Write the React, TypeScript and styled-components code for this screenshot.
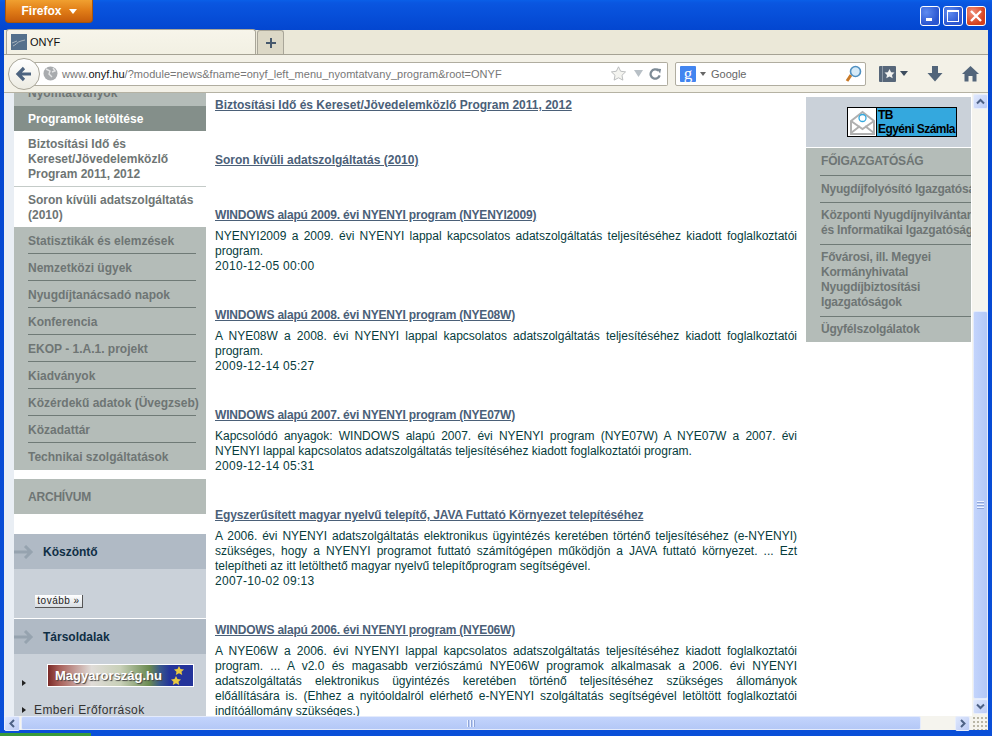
import React from "react";
import styled, { createGlobalStyle } from "styled-components";

const Global = createGlobalStyle`
  html, body { margin: 0; padding: 0; height: 736px; overflow: hidden; background: #0a4fd8; }
  * { box-sizing: border-box; }
  #root { height: 736px; }
`;

const Win = styled.div`
  width: 992px; height: 736px; display: flex; flex-direction: column;
  background: linear-gradient(180deg, #0a5fe8 0, #0a56e0 3px, #0346d0 30px, #0a4fd8 100%);
  font-family: "Liberation Sans", Arial, sans-serif; overflow: hidden;
`;
const TitleBar = styled.div`
  height: 30px; flex: none; display: flex; justify-content: space-between; padding: 0 6px 0 5px;
`;
const FirefoxBtn = styled.div`
  width: 88px; height: 23px; display: flex; align-items: center; justify-content: center; gap: 7px;
  background: linear-gradient(180deg, #f0a030 0, #e27f18 45%, #c65c0a 100%);
  border: 1px solid #a5560f; border-top: none; border-radius: 0 0 4px 4px;
  color: #fff; font-weight: bold; font-size: 12px;
  &::after { content: ""; border: 4px solid transparent; border-top: 5px solid #fff; border-bottom: none; }
`;
const Controls = styled.div`display: flex; gap: 3px; padding-top: 6px;`;
const Ctl = styled.div<{ $red?: boolean }>`
  width: 20px; height: 20px; border: 1px solid #fff; border-radius: 3px;
  background: ${p => p.$red ? "radial-gradient(circle at 30% 30%, #f0907a, #d5401c 70%)" : "radial-gradient(circle at 30% 30%, #5f8cf0, #2a55d0 70%)"};
  display: flex; align-items: center; justify-content: center;
`;
const Chrome = styled.div`
  margin: 0 4px; flex: none; background: #ebe8d8;
`;
const TabStrip = styled.div`
  height: 25px; display: flex; align-items: flex-end; padding-left: 1px; border-bottom: 1px solid #a5a294;
`;
const Tab = styled.div`
  width: 250px; height: 25px; background: linear-gradient(180deg, #f7f5ea, #f2f0e3); margin-left: 1px;
  border: 1px solid #a9a699; border-bottom: none; border-radius: 3px 3px 0 0;
  display: flex; align-items: center; gap: 3px; padding-left: 4px; font-size: 11px; color: #111;
  letter-spacing: -0.1px;
`;
const NewTab = styled.div`
  width: 27px; height: 24px; background: #dcd8c6; border: 1px solid #a9a699; border-bottom: none;
  border-radius: 3px 3px 0 0; margin-left: 1px; display: flex; align-items: center; justify-content: center;
`;
const NavBar = styled.div`
  height: 38px; background: #f3f1e7; border-bottom: 1px solid #b5b2a3; display: flex; align-items: center;
  position: relative; padding-left: 25px;
`;
const BackBtn = styled.div`
  position: absolute; left: 4px; top: 3px; width: 32px; height: 32px; border-radius: 50%;
  border: 1px solid #a9a699; background: linear-gradient(180deg, #fff, #ecebe2);
  display: flex; align-items: center; justify-content: center; z-index: 1;
`;
const UrlBar = styled.div`
  width: 639px; height: 24px; background: #fff; border: 1px solid #b0ada0; border-left: none;
  border-radius: 0 2px 2px 0; display: flex; align-items: center; padding: 0 5px 0 14px; font-size: 11px; color: #777;
  white-space: nowrap;
`;
const UrlText = styled.span`
  margin-left: 4px; flex: 1; letter-spacing: 0.02px; b { font-weight: normal; color: #111; }
`;
const DropArrow = styled.svg`margin: 0 4px 0 6px;`;
const SearchBar = styled.div`
  width: 191px; height: 24px; background: #fff; border: 1px solid #b0ada0; border-radius: 2px; margin-left: 7px;
  display: flex; align-items: center; padding: 0 3px 0 4px; font-size: 11px; color: #666; gap: 4px;
`;
const GoogleIcon = styled.div`
  width: 16px; height: 16px; background: #4285f0; color: #fff; font-family: "Liberation Serif", serif;
  font-size: 17px; line-height: 12px; display: flex; align-items: center; justify-content: center; border-radius: 1px;
`;
const SmallCaret = styled.span<{ $big?: boolean }>`
  width: 0; height: 0; border-style: solid; border-color: transparent; border-bottom: none;
  border-width: ${p => p.$big ? "5px 4px 0" : "4px 3px 0"};
  border-top-color: ${p => p.$big ? "#3c4c5e" : "#666"};
`;
const SearchText = styled.span`flex: 1; margin-left: 1px;`;
const Tools = styled.div`display: flex; align-items: center; margin-left: 13px;`;
const ToolSlot = styled.div<{ $w: number }>`
  width: ${p => p.$w}px; display: flex; align-items: center; gap: 4px;
`;
const Body = styled.div`
  margin: 0 4px; height: 623px; flex: none; display: flex; background: #fff; overflow: hidden;
`;
const Viewport = styled.div`
  width: 968px; flex: none; display: flex; overflow: hidden; height: 623px;
`;
const Gutter = styled.div`width: 10px; flex: none; background: #e9eef4;`;
const LeftCol = styled.div`
  width: 192px; flex: none; display: flex; flex-direction: column; margin-top: -7px; font-size: 12px; font-weight: bold; color: #6e7574;
  & > * { flex: none; }
`;
const Active = styled.div`
  height: 25px; background: #848f8a; color: #fff; padding-left: 14px; line-height: 27px;
`;
const Sub = styled.div<{ $line?: boolean }>`
  padding: 6px 8px 4px 14px; line-height: 15px; background: #fff;
  ${p => p.$line ? "border-bottom: 1px solid #c4cbc8;" : ""}
`;
const TopCut = styled.div`
  height: 20px; background: #b4bcb8; padding-left: 14px; line-height: 15px;
`;
const GrayList = styled.div`
  background: #b4bcb8; padding: 0 10px 0 14px; height: 243px;
`;
const GrayItem = styled.div<{ $last?: boolean }>`
  height: 27px; line-height: 28px; border-bottom: ${p => p.$last ? "none" : "1px solid #6f7a76"};
  white-space: nowrap; color: #6e7574;
`;
const Archive = styled.div`
  height: 35px; background: #b4bcb8; margin-top: 9px; padding-left: 14px; line-height: 37px; letter-spacing: -0.2px;
`;
const PanelHead = styled.div<{ $mt: number }>`
  height: 35px; margin-top: ${p => p.$mt}px; background: #b0bac5; display: flex; align-items: center;
  color: #0f2f45; gap: 9px;
`;
const PanelBody = styled.div<{ $h: number }>`
  height: ${p => p.$h}px; background: #cad1d9;
`;
const WelcomeBody = styled(PanelBody)`
  padding: 26px 0 0 21px;
`;
const MoreBtn = styled.div`
  width: 48px; height: 13px; background: linear-gradient(180deg, #fff, #d8dde2); border-right: 1px solid #555; border-bottom: 1px solid #555;
  font-size: 10px; font-weight: normal; color: #222; text-align: center; line-height: 11px; letter-spacing: 0.5px;
`;
const LinksBody = styled(PanelBody)`
  padding: 10px 0 0 8px; font-weight: normal; color: #333; position: relative;
`;
const LinkRow = styled.div<{ $h: number }>`
  display: flex; align-items: flex-end; height: ${p => p.$h}px; gap: 8px; letter-spacing: 0.4px;
`;
const Bullet = styled.span`
  width: 0; height: 0; border: 3px solid transparent; border-left: 4px solid #222; border-right: none; margin-bottom: 4px; flex: none;
`;
const Banner = styled.div`
  position: absolute; left: 33px; top: 10px; width: 147px; height: 23px; overflow: hidden; border: 1px solid #fff;
  background: linear-gradient(90deg, #7a2a28 0, #a8605a 8%, #e0dcd8 30%, #c8d0b8 50%, #6a8a50 70%, #3a5a8a 77%, #24349a 84%, #24349a 100%);
  color: #fff; font-weight: bold; font-size: 13px; padding-left: 7px; line-height: 21px; text-shadow: 1px 1px 1px #444;
`;
const BannerStars = styled.svg`
  position: absolute; right: 6px; top: 1px;
`;
const Main = styled.div`
  width: 600px; flex: none; padding: 5px 9px 0 9px; font-size: 12px; color: #063c3c; line-height: 15px;
`;
const Article = styled.div`padding-bottom: 34px;`;
const Title = styled.a<{ $ls: number }>`
  display: block; font-weight: bold; color: #4b6078; text-decoration: underline; margin-bottom: 6px; white-space: nowrap;
  letter-spacing: ${p => p.$ls}px;
`;
const Line = styled.div<{ $last?: boolean }>`
  text-align: ${p => p.$last ? "left" : "justify"};
  text-align-last: ${p => p.$last ? "left" : "justify"};
`;
const Stamp = styled.div`letter-spacing: 0.3px;`;
const RightCol = styled.div`
  width: 165px; flex: none; padding-top: 4px; font-size: 12px; font-weight: bold; color: #6e7574; overflow: hidden;
`;
const TbPanel = styled.div`
  height: 51px; background: #cad1d9; border-bottom: 1px solid #fff; display: flex; justify-content: flex-end; padding: 10px 14px 0 0;
`;
const TbBtn = styled.div`
  width: 110px; height: 30px; border: 1px solid #000; display: flex; background: #34a8de; color: #000; line-height: 14px;
`;
const TbIcon = styled.div`
  width: 29px; background: #fff; border-right: 1px solid #000; display: flex; align-items: center; justify-content: center; flex: none;
`;
const TbText = styled.div`padding: 0 0 0 1px; white-space: nowrap; font-size: 12px; letter-spacing: -0.55px;`;
const RightList = styled.div`
  background: #b4bcb8; padding-left: 14px; white-space: nowrap; letter-spacing: -0.2px;
`;
const RightItem = styled.div<{ $top?: number; $bottom?: number; $last?: boolean }>`
  padding: ${p => p.$top ?? 5}px 0 ${p => p.$bottom ?? 6}px 1px; line-height: 15px;
  border-bottom: ${p => p.$last ? "none" : "1px solid #6f7a76"};
`;
const VScrollSpacer = styled.div`flex: 1;`;
const VScroll = styled.div`
  width: 16px; flex: none; background: #f5f4ee; display: flex; flex-direction: column; align-items: center; padding-top: 1px;
`;
const SBtn = styled.div<{ $w?: number }>`
  width: ${p => p.$w ?? 15}px; height: 15px; flex: none; background: linear-gradient(135deg, #dfe8fd, #bccbf5); border: 1px solid #e8eefc; border-radius: 2px;
  display: flex; align-items: center; justify-content: center;
`;
const VThumb = styled.div`
  width: 15px; flex: none; height: 388px; margin-top: 202px; background: linear-gradient(90deg, #c3d4fc, #b4c8f6);
  border: 1px solid #e4ebfc; border-radius: 2px; display: flex; align-items: center; justify-content: center;
  &::after { content: ""; width: 7px; height: 8px; background: repeating-linear-gradient(180deg, #eef3ff 0 1px, #8fa5d8 1px 2px, transparent 2px 3px); }
`;
const HScroll = styled.div`
  margin: 0 4px; height: 14px; flex: none; background: #f5f4ee; display: flex; align-items: center;
`;
const HThumb = styled.div`
  width: 900px; height: 14px; margin: 0 34px 0 1px; background: linear-gradient(180deg, #c3d4fc, #b4c8f6);
  border: 1px solid #e4ebfc; border-radius: 2px; display: flex; align-items: center; justify-content: center;
  &::after { content: ""; width: 8px; height: 7px; background: repeating-linear-gradient(90deg, #eef3ff 0 1px, #8fa5d8 1px 2px, transparent 2px 3px); }
`;
const Grip = styled.div`
  width: 16px; height: 14px; margin-left: 2px;
  background: radial-gradient(circle, #b9b6a6 1px, transparent 1.2px) 0 0 / 4px 4px;
`;
const BottomBar = styled.div`
  flex: 1; position: relative;
  &::before { content: ""; position: absolute; left: 0; bottom: 0; width: 91px; height: 3px; background: #3a9a3a; }
`;

const Chev = ({ d }: { d: string }) => (
  <svg width="9" height="9" viewBox="0 0 9 9"><path d={d} fill="none" stroke="#4d6185" strokeWidth="2" /></svg>
);

type Art = { t: string; ls?: number; lines?: string[]; stamp?: string };

const articles: Art[] = [
  { t: "Biztosítási Idő és Kereset/Jövedelemközlő Program 2011, 2012" },
  { t: "Soron kívüli adatszolgáltatás (2010)" },
  { t: "WINDOWS alapú 2009. évi NYENYI program (NYENYI2009)", ls: -0.2, lines: ["NYENYI2009 a 2009. évi NYENYI lappal kapcsolatos adatszolgáltatás teljesítéséhez kiadott foglalkoztatói", "program."], stamp: "2010-12-05 00:00" },
  { t: "WINDOWS alapú 2008. évi NYENYI program (NYE08W)", ls: -0.2, lines: ["A NYE08W a 2008. évi NYENYI lappal kapcsolatos adatszolgáltatás teljesítéséhez kiadott foglalkoztatói", "program."], stamp: "2009-12-14 05:27" },
  { t: "WINDOWS alapú 2007. évi NYENYI program (NYE07W)", ls: -0.2, lines: ["Kapcsolódó anyagok: WINDOWS alapú 2007. évi NYENYI program (NYE07W) A NYE07W a 2007. évi", "NYENYI lappal kapcsolatos adatszolgáltatás teljesítéséhez kiadott foglalkoztatói program."], stamp: "2009-12-14 05:31" },
  { t: "Egyszerűsített magyar nyelvű telepítő, JAVA Futtató Környezet telepítéséhez", ls: -0.1, lines: ["A 2006. évi NYENYI adatszolgáltatás elektronikus ügyintézés keretében történő teljesítéséhez (e-NYENYI)", "szükséges, hogy a NYENYI programot futtató számítógépen működjön a JAVA futtató környezet. ... Ezt", "telepítheti az itt letölthető magyar nyelvű telepítőprogram segítségével."], stamp: "2007-10-02 09:13" },
  { t: "WINDOWS alapú 2006. évi NYENYI program (NYE06W)", ls: -0.2, lines: ["A NYE06W a 2006. évi NYENYI lappal kapcsolatos adatszolgáltatás teljesítéséhez kiadott foglalkoztatói", "program. ... A v2.0 és magasabb verziószámú NYE06W programok alkalmasak a 2006. évi NYENYI", "adatszolgáltatás elektronikus ügyintézés keretében történő teljesítéséhez szükséges állományok", "előállítására is. (Ehhez a nyitóoldalról elérhető e-NYENYI szolgáltatás segítségével letöltött foglalkoztatói", "indítóállomány szükséges.)"] },
];

const grayItems = ["Statisztikák és elemzések", "Nemzetközi ügyek", "Nyugdíjtanácsadó napok", "Konferencia", "EKOP - 1.A.1. projekt", "Kiadványok", "Közérdekű adatok (Üvegzseb)", "Közadattár", "Technikai szolgáltatások"];

const Arrow = () => (
  <svg width="20" height="14" viewBox="0 0 20 14"><path d="M0 7h17M11 1l6 6-6 6" fill="none" stroke="#96a3af" strokeWidth="3" /></svg>
);

export default function App() {
  return (
    <Win>
      <Global />
      <TitleBar>
        <FirefoxBtn>Firefox</FirefoxBtn>
        <Controls>
          <Ctl><svg width="10" height="12" viewBox="0 0 10 12"><rect x="1" y="8" width="6" height="3" fill="#fff" /></svg></Ctl>
          <Ctl><svg width="14" height="14" viewBox="0 0 14 14"><rect x="1.5" y="1.5" width="11" height="11" fill="none" stroke="#fff" /><rect x="1" y="1" width="12" height="2" fill="#fff" /></svg></Ctl>
          <Ctl $red><svg width="12" height="12" viewBox="0 0 12 12"><path d="M1 1l10 10M11 1L1 11" stroke="#fff" strokeWidth="2.4" /></svg></Ctl>
        </Controls>
      </TitleBar>
      <Chrome>
        <TabStrip>
          <Tab>
            <svg width="16" height="16" viewBox="0 0 16 16"><rect width="16" height="16" fill="#54708c" /><path d="M2 12c3-1 4-4 8-5l4-1M1 9l5-2" stroke="#a8b4bd" fill="none" /></svg>
            ONYF
          </Tab>
          <NewTab><svg width="12" height="12" viewBox="0 0 12 12"><path d="M6 1v10M1 6h10" stroke="#46586c" strokeWidth="2" /></svg></NewTab>
        </TabStrip>
        <NavBar>
          <BackBtn><svg width="18" height="16" viewBox="0 0 18 16"><path d="M16 8H4M9 2L3 8l6 6" fill="none" stroke="#4d6480" strokeWidth="3.2" /></svg></BackBtn>
          <UrlBar>
            <svg width="15" height="15" viewBox="0 0 15 15"><circle cx="7.5" cy="7.5" r="7" fill="#a8abae" /><path d="M3 3l4 2-1 3 3 3M10 2l2 3-3 1" stroke="#e3e4e5" fill="none" strokeWidth="1.4" /></svg>
            <UrlText>www.<b>onyf.hu</b>/?module=news&amp;fname=onyf_left_menu_nyomtatvany_program&amp;root=ONYF</UrlText>
            <svg width="17" height="17" viewBox="0 0 19 18"><path d="M9.5 1.5l2.4 5 5.5.7-4 3.800 1 5.400-4.900-2.600-4.900 2.600 1-5.400-4-3.800 5.500-.7z" fill="#f4f4f0" stroke="#b5b7b8" /></svg>
            <DropArrow width="12" height="8" viewBox="0 0 12 8"><path d="M1 0h9L5.500 7z" fill="#b8c0c6" /></DropArrow>
            <svg width="13" height="14" viewBox="0 0 14 14"><path d="M11.500 8.500A5 5 0 1 1 10 3.300" fill="none" stroke="#7d8b96" strokeWidth="2.400" /><path d="M8 1l5 .500-1 5z" fill="#7d8b96" /></svg>
          </UrlBar>
          <SearchBar>
            <GoogleIcon>g</GoogleIcon>
            <SmallCaret />
            <SearchText>Google</SearchText>
            <svg width="17" height="18" viewBox="0 0 17 18"><path d="M6 10l-4 6" stroke="#c97a28" strokeWidth="3" /><circle cx="10.500" cy="6.500" r="5" fill="#d5eaf8" stroke="#4f90c0" strokeWidth="1.600" /></svg>
          </SearchBar>
          <Tools>
            <ToolSlot $w={48}>
              <svg width="17" height="16" viewBox="0 0 17 16"><rect width="17" height="16" rx="1" fill="#566679" /><rect x="3" y="0" width="1" height="16" fill="#8d99a6" /><path d="M10.500 3l1.600 3.200 3.400.4-2.500 2.300.7 3.400-3.200-1.700-3.200 1.700.7-3.400-2.500-2.300 3.400-.4z" fill="#f2f2f0" /></svg>
              <SmallCaret $big />
            </ToolSlot>
            <ToolSlot $w={35}>
              <svg width="16" height="16" viewBox="0 0 16 16"><path d="M5 0h6v7h4.500L8 15.500.500 7H5z" fill="#52657a" /></svg>
            </ToolSlot>
            <ToolSlot $w={18}>
              <svg width="17" height="16" viewBox="0 0 17 16"><path d="M8.500 0L17 8h-2.500v7.500H10.500V10h-4v5.500H2.500V8H0z" fill="#52657a" /></svg>
            </ToolSlot>
          </Tools>
        </NavBar>
      </Chrome>
      <Body>
        <Viewport>
          <Gutter />
          <LeftCol>
            <TopCut>Nyomtatványok</TopCut>
            <Active>Programok letöltése</Active>
            <Sub $line>Biztosítási Idő és<br />Kereset/Jövedelemközlő<br />Program 2011, 2012</Sub>
            <Sub>Soron kívüli adatszolgáltatás<br />(2010)</Sub>
            <GrayList>
              {grayItems.map((g, i) => <GrayItem key={g} $last={i === grayItems.length - 1}>{g}</GrayItem>)}
            </GrayList>
            <Archive>ARCHÍVUM</Archive>
            <PanelHead $mt={20}><Arrow />Köszöntő</PanelHead>
            <WelcomeBody $h={49}><MoreBtn>tovább »</MoreBtn></WelcomeBody>
            <PanelHead $mt={1}><Arrow />Társoldalak</PanelHead>
            <LinksBody $h={70}>
              <Banner>
                Magyarország.hu
                <BannerStars width="18" height="20" viewBox="0 0 18 20">
                  <path d="M10 0l1.500 3 3.500.4-2.500 2.300.7 3.300-3.200-1.700-3.200 1.700.7-3.300L5 3.400 8.500 3z" fill="#e8c840" />
                  <path d="M7 10l1.500 3 3.500.4-2.500 2.300.7 3.300L7 17.300l-3.200 1.700.7-3.300L2 13.400 5.500 13z" fill="#e8c840" />
                </BannerStars>
              </Banner>
              <LinkRow $h={26}><Bullet /></LinkRow>
              <LinkRow $h={27}><Bullet />Emberi Erőforrások</LinkRow>
            </LinksBody>
          </LeftCol>
          <Main>
            {articles.map(a => (
              <Article key={a.t}>
                <Title $ls={a.ls ?? 0}>{a.t}</Title>
                {a.lines?.map((l, i) => <Line key={l} $last={i === a.lines!.length - 1}>{l}</Line>)}
                {a.stamp && <Stamp>{a.stamp}</Stamp>}
              </Article>
            ))}
          </Main>
          <RightCol>
            <TbPanel>
              <TbBtn>
                <TbIcon>
                  <svg width="25" height="25" viewBox="0 0 25 25"><path d="M1 11L12.500 2 24 11v13H1z" fill="#fff" stroke="#b0b0b0" strokeWidth="2" /><path d="M1 23l9-7M24 23l-9-7M1 11l11.500 8L24 11" fill="none" stroke="#b0b0b0" strokeWidth="2" /><circle cx="12.500" cy="8" r="3.500" fill="none" stroke="#34a8de" strokeWidth="1.300" /></svg>
                </TbIcon>
                <TbText>TB<br />Egyéni Számla</TbText>
              </TbBtn>
            </TbPanel>
            <RightList>
              <RightItem $top={6} $bottom={6}>FŐIGAZGATÓSÁG</RightItem>
              <RightItem $top={6} $bottom={5}>Nyugdíjfolyósító Igazgatóság</RightItem>
              <RightItem>Központi Nyugdíjnyilvántartó<br />és Informatikai Igazgatóság</RightItem>
              <RightItem>Fővárosi, ill. Megyei<br />Kormányhivatal<br />Nyugdíjbiztosítási<br />Igazgatóságok</RightItem>
              <RightItem $last $bottom={5}>Ügyfélszolgálatok</RightItem>
            </RightList>
          </RightCol>
          <VScrollSpacer />
        </Viewport>
        <VScroll>
          <SBtn><Chev d="M1 6.500l3.500-3.500 3.500 3.500" /></SBtn>
          <VThumb />
          <SBtn><Chev d="M1 2.500l3.500 3.500 3.500-3.500" /></SBtn>
        </VScroll>
      </Body>
      <HScroll>
        <SBtn $w={16}><Chev d="M6 1L2.500 4.500 6 8" /></SBtn>
        <HThumb />
        <SBtn $w={15}><Chev d="M3 1l3.500 3.500L3 8" /></SBtn>
        <Grip />
      </HScroll>
      <BottomBar />
    </Win>
  );
}
